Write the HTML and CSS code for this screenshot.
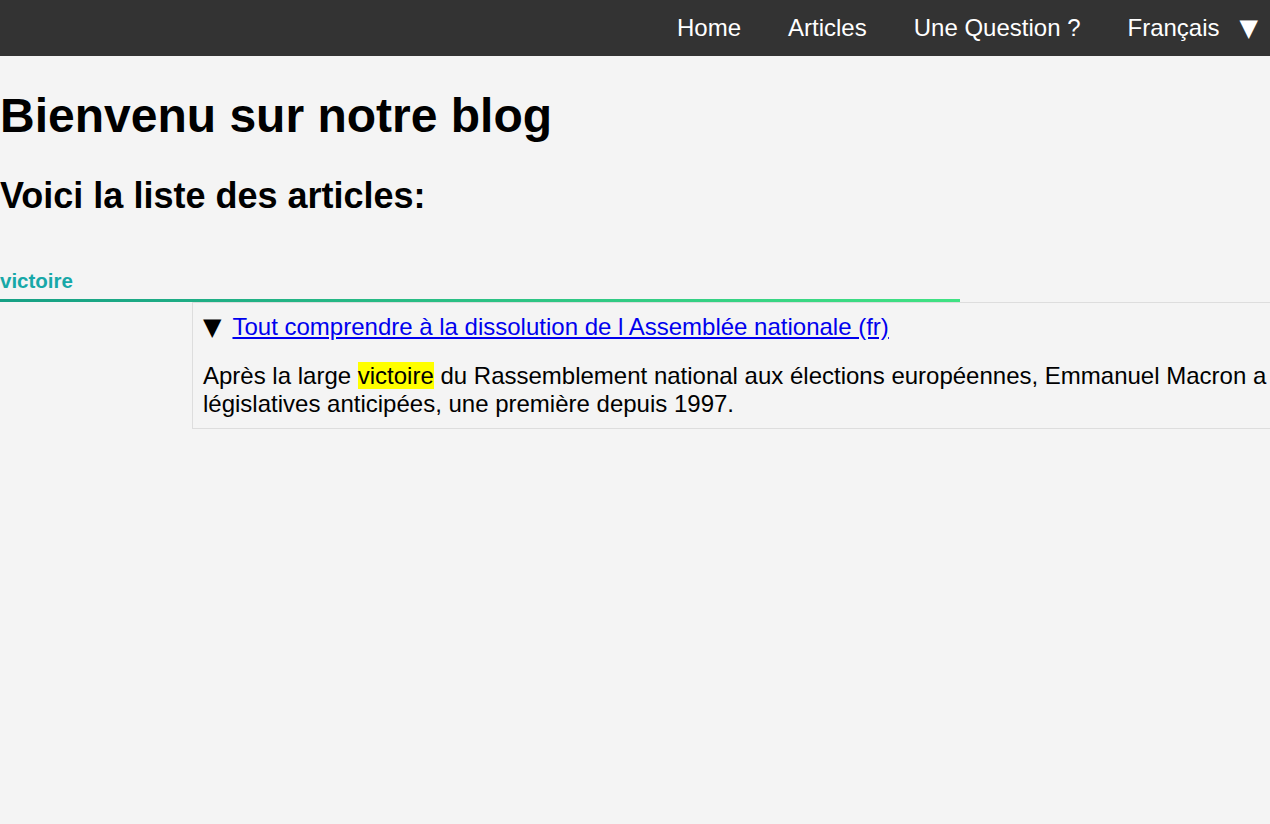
FILE: index.html
```html
<!DOCTYPE html>
<html lang="fr">
<head>
<meta charset="utf-8">
<title>Blog</title>
<link rel="stylesheet" href="styles.css">
</head>
<body>
<nav class="topbar">
  <a class="nav-link" href="#">Home</a>
  <a class="nav-link" href="#">Articles</a>
  <a class="nav-link" href="#">Une Question ?</a>
  <span class="nav-link lang">Français</span>
  <span class="lang-arrow">▼</span>
</nav>
<main class="content">
  <h1 class="title">Bienvenu sur notre blog</h1>
  <h2 class="subtitle">Voici la liste des articles:</h2>
  <input class="search" type="text" value="victoire" autofocus>
  <section class="articles">
    <details class="article" open>
      <summary class="article-summary"><a href="#">Tout comprendre à la dissolution de l Assemblée nationale (fr)</a></summary>
      <p class="article-text">Après la large <mark>victoire</mark> du Rassemblement national aux élections européennes, Emmanuel Macron a annoncé la dissolution de l'Assemblée nationale et des élections<br>législatives anticipées, une première depuis 1997.</p>
    </details>
  </section>
</main>
</body>
</html>
```

FILE: styles.css
```css
html, body {
  margin: 0;
  padding: 0;
  overflow-x: hidden;
}

body {
  background: #f4f4f4;
  font-family: "Liberation Sans", Arial, sans-serif;
  color: #000;
}

.topbar {
  height: 56px;
  background: #333333;
  display: flex;
  justify-content: flex-end;
  align-items: center;
  padding-right: 12px;
  font-size: 24px;
}

.nav-link {
  color: #ffffff;
  text-decoration: none;
  padding: 0 23.5px;
}

.nav-link.lang {
  padding-right: 20px;
}

.lang-arrow {
  color: #ffffff;
  font-family: "DejaVu Sans", sans-serif;
  font-size: 24px;
}

.title {
  font-size: 48px;
  margin: 32px 0;
}

.subtitle {
  font-size: 36px;
  margin: 30px 0;
}

.search {
  display: block;
  box-sizing: border-box;
  width: 960px;
  height: 55px;
  margin: 0;
  padding: 16px 0 0 0;
  border: none;
  border-bottom: 3px solid transparent;
  border-image: linear-gradient(to right, #16a085, #40e283) 1;
  background: transparent;
  font-family: "Liberation Sans", Arial, sans-serif;
  font-size: 20.5px;
  font-weight: bold;
  color: #17a8a8;
  caret-color: #17a8a8;
  outline: none;
}

.articles {
  margin-left: 192px;
}

.article {
  width: 1900px;
  border: 1px solid #dddddd;
  padding: 10px;
  font-size: 24px;
}

.article-summary {
  list-style: none;
  cursor: pointer;
}

.article-summary::-webkit-details-marker {
  display: none;
}

.article-summary::before {
  content: "▼";
  font-family: "DejaVu Sans", sans-serif;
  font-size: 24px;
  margin-right: 11px;
}

.article-summary a {
  color: #0000ee;
  text-decoration: underline;
}

.article-text {
  margin: 21px 0 0 0;
}

mark {
  background: #ffff00;
  color: #000;
}
```
